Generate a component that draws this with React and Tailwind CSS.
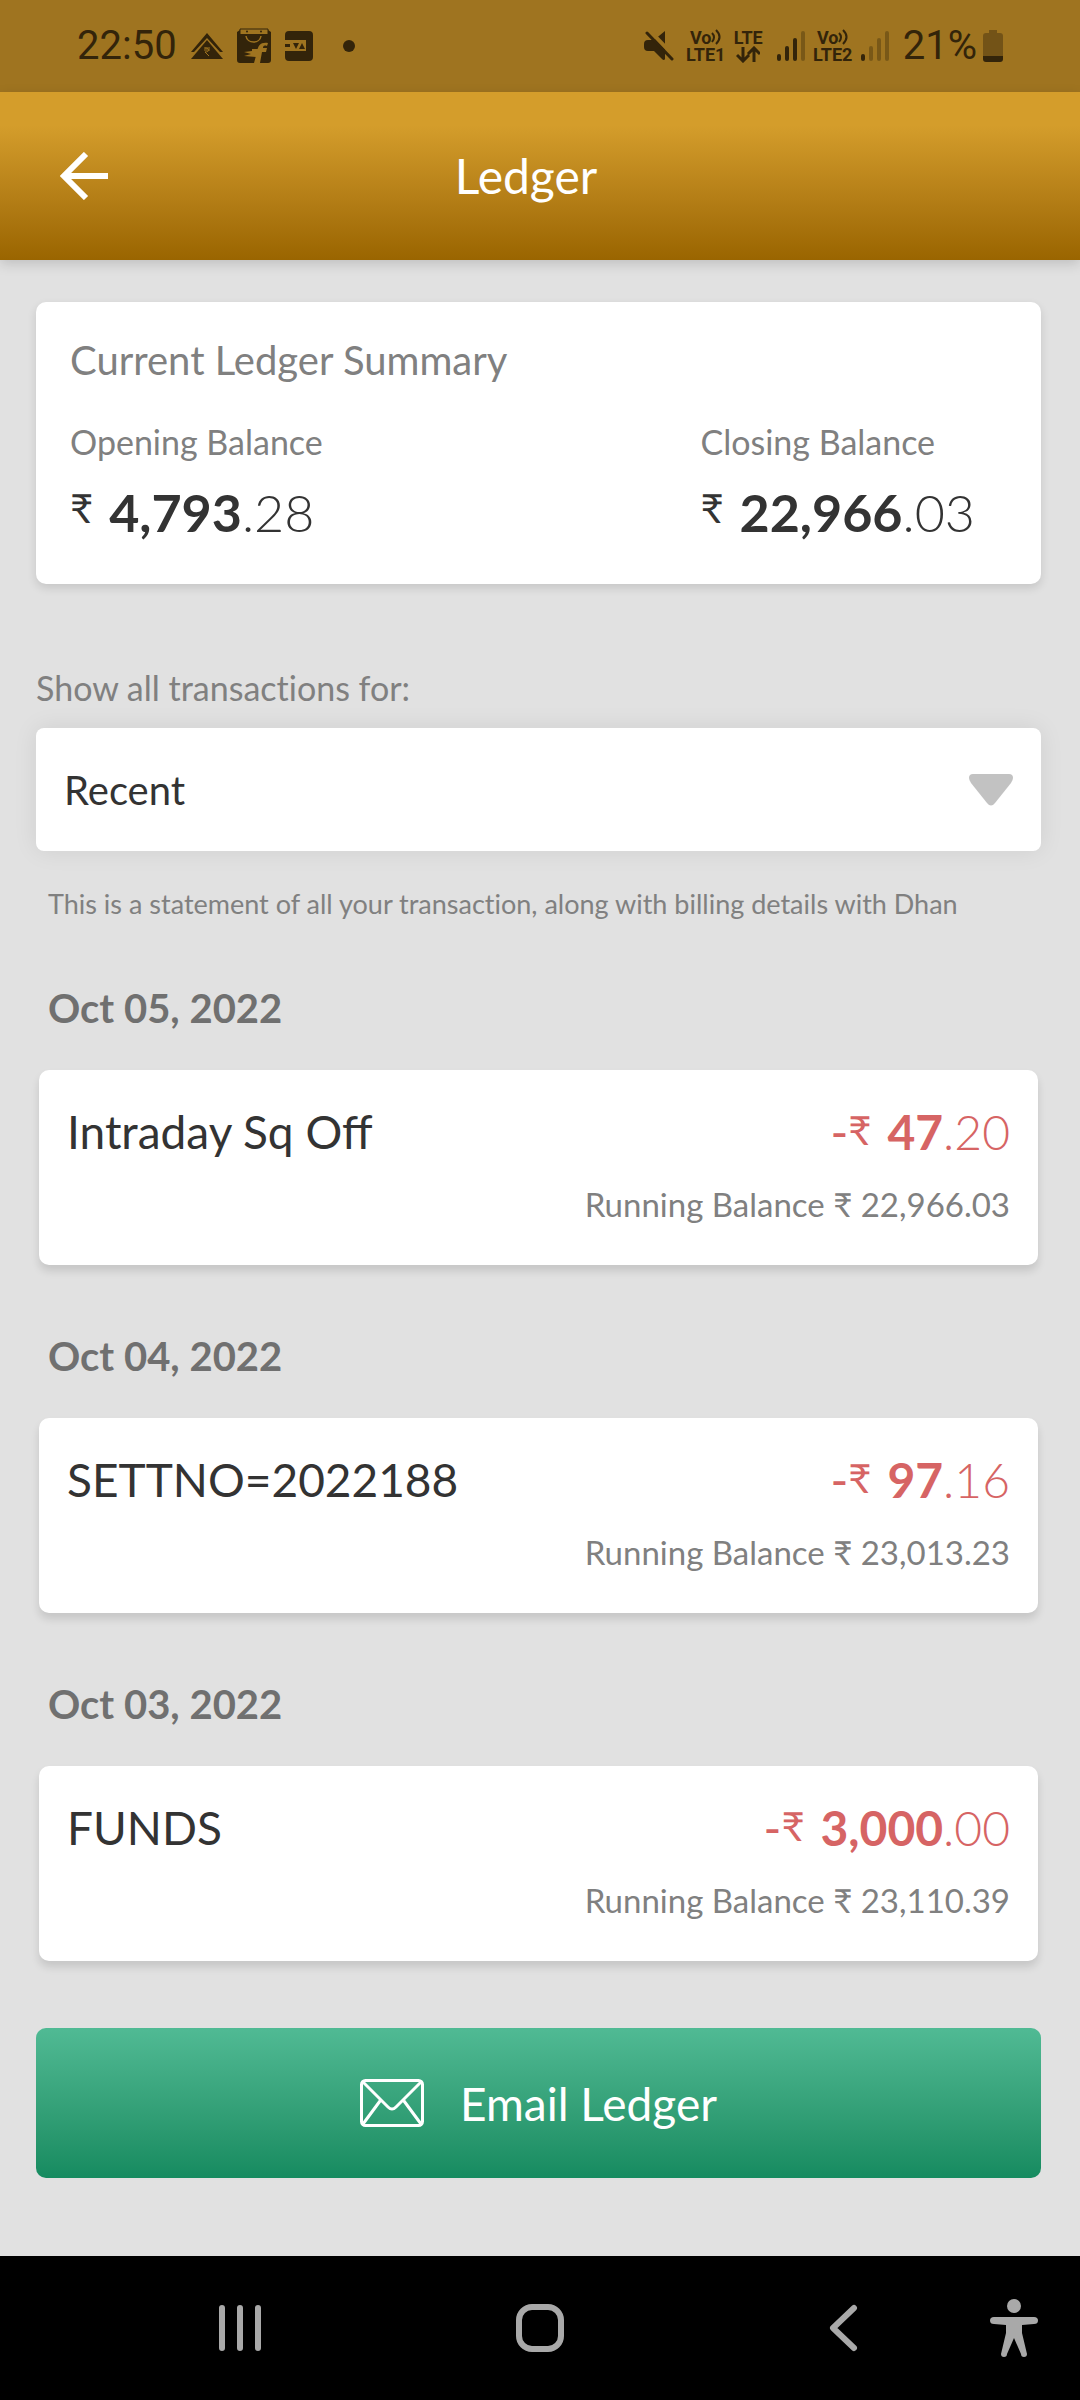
import { useState } from "react";

const TRANSACTIONS = [
    { date: "Oct 05, 2022", title: "Intraday Sq Off", whole: "47", cents: "20", balance: "22,966.03" },
    { date: "Oct 04, 2022", title: "SETTNO=2022188", whole: "97", cents: "16", balance: "23,013.23" },
    { date: "Oct 03, 2022", title: "FUNDS", whole: "3,000", cents: "00", balance: "23,110.39" },
];

const PERIODS = ["Recent", "This Month", "This Year"];

//signal bars, `level` of the four are lit
const Signal = ({ level }) => (
    <svg width="28" height="32" viewBox="0 0 28 32" fill="currentColor" aria-hidden="true">
        {[7, 15, 23, 30].map((h, i) => (
            <rect key={h} x={i * 8} y={31 - h} width="4" height={h} rx="2" opacity={i < level ? 1 : 0.35} />
        ))}
    </svg>
);

const VoLte = ({ sim }) => (
    <span className="flex w-10 flex-col items-center text-[18px] leading-[17px] font-bold">
        <span className="flex items-center">
            Vo
            <svg width="10" height="17" viewBox="0 0 10 17" fill="none" stroke="currentColor" strokeWidth="2" aria-hidden="true">
                <path d="M1 4q4 4 0 9M5 1q7 7 0 14" />
            </svg>
        </span>
        <span>LTE{sim}</span>
    </span>
);

const StatusBar = () => (
    <div className="flex h-[92px] items-center justify-between bg-[#9f7420] px-[77px] font-['Roboto',sans-serif] text-[#33240a]">
        <div className="flex items-center">
            <span className="text-[40px] leading-[48px]">22:50</span>
            <svg className="ml-3.5" width="32" height="26" viewBox="0 0 32 26" aria-hidden="true">
                <path d="M16 0 32 19h-3L16 5 3 19H0z" fill="currentColor" />
                <path d="M16 7 32 26H0z" fill="currentColor" />
                <path d="M13 15h6M13 17h6M14 15c5 0 5 4 0 4l4 4" fill="none" stroke="#9f7420" strokeWidth="1" />
            </svg>
            <svg className="ml-3.5" width="34" height="36" viewBox="0 0 34 36" aria-hidden="true">
                <path d="M3 7V1h28v6" fill="none" stroke="currentColor" strokeWidth="1" />
                <path d="M0 4 3 2v4h28V2l3 2v28q0 3-3 3H3q-3 0-3-3z" fill="currentColor" />
                <circle cx="10" cy="3.500" r="1" fill="currentColor" />
                <circle cx="24" cy="3.500" r="1" fill="currentColor" />
                <path d="M9 8c1 8 14 8 15 0" fill="none" stroke="#9f7420" strokeWidth="1.500" />
                <path d="M31 15c-7-1-10 2-11 9l-3 11h6l2-11h4l1-4h-4c0-2 1-3 4-2z" fill="#9f7420" />
                <path d="M15 21h8v4l-4 4-12-1 7-2-7-2 8-1z" fill="#9f7420" />
            </svg>
            <svg className="ml-3.5" width="28" height="30" viewBox="0 0 28 30" aria-hidden="true">
                <path d="M0 4q0-4 4-4h20q4 0 4 4v22q0 4-4 4H4q-4 0-4-4v-6h21V9H0z" fill="currentColor" />
                <path d="M0 13h5v3H0zM8 12h6l-3 6zM14 18h6l-3-6z" fill="currentColor" />
            </svg>
            <span className="ml-[30px] size-3 rounded-full bg-[#33240a]" />
        </div>
        <div className="flex items-center">
            <svg width="30" height="32" viewBox="0 0 30 32" aria-hidden="true">
                <path d="M21 1v28q-1 2-3 0l-8-8H4q-4 0-4-4v-3q0-4 4-4h6z" fill="currentColor" />
                <path d="M5 0 30 26" stroke="#9f7420" strokeWidth="4" />
                <path d="M3 3 28 29" stroke="currentColor" strokeWidth="3" strokeLinecap="round" />
            </svg>
            <span className="ml-3">
                <VoLte sim="1" />
            </span>
            <span className="ml-2 flex flex-col items-center text-[18px] leading-[17px] font-bold">
                <span>LTE</span>
                <svg width="24" height="17" viewBox="0 0 24 17" fill="none" stroke="currentColor" strokeWidth="3" aria-hidden="true">
                    <path d="M7 1v13M1 9l6 6 6-6M18 16V3M12 8l6-6 6 6" />
                </svg>
            </span>
            <span className="ml-3.5">
                <Signal level={3} />
            </span>
            <span className="ml-2">
                <VoLte sim="2" />
            </span>
            <span className="ml-2">
                <Signal level={1} />
            </span>
            <span className="ml-3.5 text-[40px] leading-[48px]">21%</span>
            <svg className="ml-1.5" width="20" height="32" viewBox="0 0 20 32" fill="currentColor" aria-hidden="true">
                <path d="M6 0h8v3h3q3 0 3 3v20H0V6q0-3 3-3h3z" opacity="0.4" />
                <path d="M0 26h20v3q0 3-3 3H3q-3 0-3-3z" />
            </svg>
        </div>
    </div>
);

const Amount = ({ whole, cents, size = "text-[48px]" }) => (
    <span className="flex items-start">
        <span className="text-[40px] leading-[52px]">₹</span>
        <span className={`ml-4 ${size}`}>
            <b className="font-bold">{whole}</b>
            <span className="font-light">.{cents}</span>
        </span>
    </span>
);

const Balance = ({ label, whole, cents }) => (
    <div>
        <p className="text-[34px] leading-[48px]">{label}</p>
        <p className="mt-4 leading-[60px] text-[#333]">
            <Amount whole={whole} cents={cents} size="text-[52px]" />
        </p>
    </div>
);

const Transaction = ({ item }) => (
    <section>
        <h2 className="ml-3 text-[40px] leading-[48px] font-bold text-[#707070]">{item.date}</h2>
        <div className="mx-[3px] mt-[38px] rounded-[10px] bg-white pt-[34px] pr-7 pb-[37px] pl-7 shadow-[0_6px_8px_rgba(0,0,0,0.12)]">
            <div className="flex items-center justify-between leading-[56px]">
                <h3 className="text-[46px] text-[#333]">{item.title}</h3>
                <span className="flex text-[#d66464]">
                    <span className="text-[48px]">-</span>
                    <Amount whole={item.whole} cents={item.cents} />
                </span>
            </div>
            <p className="mt-5 text-right text-[33px] leading-[48px] text-[#808080]">Running Balance ₹ {item.balance}</p>
        </div>
    </section>
);

const NavBar = () => (
    <nav className="flex h-36 items-center bg-black text-[#a9a9a9]">
        <div className="grid flex-1 grid-cols-3 justify-items-center pl-[90px]">
            <button aria-label="Recent apps">
                <svg width="48" height="48" viewBox="0 0 48 48" stroke="currentColor" strokeWidth="6" strokeLinecap="round">
                    <path d="M6 4v40M24 4v40M42 4v40" />
                </svg>
            </button>
            <button aria-label="Home">
                <svg width="48" height="48" viewBox="0 0 48 48" fill="none" stroke="currentColor" strokeWidth="6">
                    <rect x="3" y="3" width="42" height="42" rx="13" />
                </svg>
            </button>
            <button aria-label="Back">
                <svg width="48" height="48" viewBox="0 0 48 48" fill="none" stroke="currentColor" strokeWidth="6" strokeLinecap="round" strokeLinejoin="round">
                    <path d="M38 4 17 24l21 20" />
                </svg>
            </button>
        </div>
        <button aria-label="Accessibility" className="mr-[42px]">
            <svg width="48" height="58" viewBox="0 0 48 58" fill="currentColor">
                <circle cx="24" cy="7" r="7" />
                <path d="M4 18h40q4 0 4 3.500T44 25l-12 1v8l5 21q0 3-3 3t-3-3l-7-16-7 16q0 3-3 3t-3-3l5-21v-8L4 25q-4 0-4-3.500T4 18z" />
            </svg>
        </button>
    </nav>
);

export default function App() {
    const [period, setPeriod] = useState(PERIODS[0]);

    return (
        <div className="flex min-h-screen flex-col bg-[#e1e1e1] font-['Lato','Noto_Sans',sans-serif]">
            <StatusBar />

            <header className="grid h-[168px] grid-cols-[1fr_auto_1fr] items-center bg-linear-to-b from-[#d49d2b] from-20% to-[#9a6500] pr-20 pl-[52px] text-white shadow-[0_4px_12px_rgba(0,0,0,0.15)]">
                <button aria-label="Go back" className="justify-self-start px-2">
                    <svg width="48" height="48" viewBox="0 0 48 48" fill="none" stroke="currentColor" strokeWidth="6">
                        <path d="M26 2 4 24l22 22M4 24h44" />
                    </svg>
                </button>
                <h1 className="text-[48px] leading-[60px]">Ledger</h1>
            </header>

            <main className="flex-1 pt-[42px] pr-[39px] pb-[78px] pl-9">
                {/* Summary */}
                <section className="rounded-[10px] bg-white px-[34px] pt-[30px] pb-[42px] text-[#808080] shadow-[0_4px_10px_rgba(0,0,0,0.12)]">
                    <h2 className="text-[40px] leading-[56px]">Current Ledger Summary</h2>
                    <div className="mt-[30px] flex justify-between pr-8">
                        <Balance label="Opening Balance" whole="4,793" cents="28" />
                        <Balance label="Closing Balance" whole="22,966" cents="03" />
                    </div>
                </section>

                {/* Period filter */}
                <label htmlFor="period" className="mt-20 block text-[34px] leading-[48px] text-[#808080] [font-variant-ligatures:none]">
                    Show all transactions for:
                </label>
                <div className="relative mt-4">
                    <select
                        id="period"
                        className="block h-[123px] w-full appearance-none rounded-lg bg-white pr-24 pl-7 text-[40px] text-[#333] shadow-[0_0_24px_rgba(0,0,0,0.08)]"
                        value={period}
                        onChange={(e) => setPeriod(e.target.value)}
                    >
                        {PERIODS.map((p) => (
                            <option key={p}>{p}</option>
                        ))}
                    </select>
                    <svg className="pointer-events-none absolute top-[46px] right-7" width="44" height="32" viewBox="0 0 44 32" fill="#c2c2c2" aria-hidden="true">
                        <path d="M4 0h36q4 0 4 4 0 2-2 5L26 29q-4 5-8 0L2 9Q0 6 0 4q0-4 4-4z" />
                    </svg>
                </div>

                <p className="mt-[33px] ml-3 text-[27px] leading-10 text-[#808080] [font-variant-ligatures:none]">
                    This is a statement of all your transaction, along with billing details with Dhan
                </p>

                <div className="mt-[60px] flex flex-col gap-[67px]">
                    {TRANSACTIONS.map((item) => (
                        <Transaction key={item.date} item={item} />
                    ))}
                </div>

                <button className="mt-[67px] flex h-[150px] w-full items-center justify-center gap-9 rounded-[10px] bg-linear-to-b from-[#50ba94] to-[#158b60] text-[46px] text-white">
                    <svg width="64" height="48" viewBox="0 0 64 48" fill="none" stroke="currentColor" strokeWidth="3" aria-hidden="true">
                        <rect x="1.500" y="1.500" width="61" height="45" rx="4" />
                        <path d="M3 3 28 28q4 4 8 0L61 3M3 45 20 22M61 45 44 22" />
                    </svg>
                    Email Ledger
                </button>
            </main>

            <NavBar />
        </div>
    );
}
